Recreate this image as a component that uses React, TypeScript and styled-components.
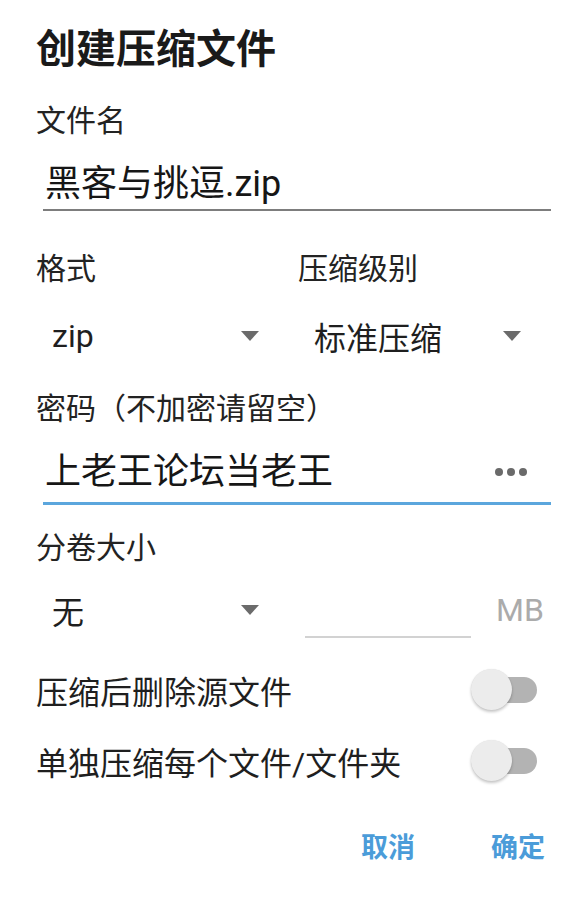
import React from "react";
import styled, { createGlobalStyle } from "styled-components";

const GlobalStyle = createGlobalStyle`
  html, body {
    margin: 0;
    padding: 0;
    background: #ffffff;
  }
  body {
    font-family: "Roboto", "Noto Sans CJK SC", "Noto Sans", sans-serif;
    color: #1f1f1f;
  }
  * { box-sizing: border-box; }
`;

const Dialog = styled.div`
  display: flex;
  flex-direction: column;
  width: 588px;
  padding: 0 37px 0 36px;
  background: #ffffff;
`;

const Title = styled.h1`
  margin: 0;
  height: 92px;
  display: flex;
  align-items: center;
  font-size: 40px;
  font-weight: 700;
  color: #1a1a1a;
`;

const Label = styled.div<{ $top?: number }>`
  height: 52px;
  margin-top: ${(p) => p.$top ?? 0}px;
  display: flex;
  align-items: center;
  font-size: 30px;
  color: #232323;
  white-space: nowrap;
`;

const Paren = styled.span`
  font-family: "Noto Sans CJK TC", "Noto Sans CJK SC", sans-serif;
  font-feature-settings: "halt" 0, "chws" 0;
  display: inline-block;
  width: 1em;
  text-align: center;
`;

const TextField = styled.div<{ $focused?: boolean }>`
  margin-left: 7px;
  padding: 20px 0 ${(p) => (p.$focused ? 10 : 5)}px 2px;
  border-bottom: ${(p) => (p.$focused ? "3px solid #5ba6dd" : "2px solid #7d7d7d")};
  display: flex;
  align-items: center;
  justify-content: space-between;
`;

const FieldText = styled.span`
  font-size: 36px;
  line-height: 40px;
  color: #161616;
  white-space: nowrap;
`;

const Dots = styled.div`
  display: flex;
  gap: 4px;
  margin-right: 24px;
`;

const Dot = styled.span`
  width: 8px;
  height: 8px;
  border-radius: 50%;
  background: #6a6a6a;
`;

const TwoCol = styled.div`
  margin-top: 29px;
  display: grid;
  grid-template-columns: 262px 1fr;
`;

const Spinner = styled.div<{ $h: number }>`
  width: 262px;
  height: ${(p) => p.$h}px;
  padding: 0 39px 0 16px;
  display: flex;
  align-items: center;
  justify-content: space-between;
  font-size: 32px;
  color: #1f1f1f;
`;

const Arrow = styled.span`
  width: 0;
  height: 0;
  border-left: 9.5px solid transparent;
  border-right: 9.5px solid transparent;
  border-top: 10px solid #6b6b6b;
`;

const SizeRow = styled.div`
  height: 78px;
  display: flex;
  align-items: center;
`;

const SizeInput = styled.div`
  width: 166px;
  height: 56px;
  margin-left: 7px;
  border-bottom: 2px solid #d2d2d2;
`;

const Unit = styled.span`
  margin-left: 25px;
  font-size: 32px;
  color: #ababab;
`;

const ToggleRow = styled.div<{ $top?: number }>`
  height: 71px;
  margin-top: ${(p) => p.$top ?? 0}px;
  padding-right: 14px;
  display: flex;
  align-items: center;
  justify-content: space-between;
  font-size: 32px;
  color: #1f1f1f;
`;

const Switch = styled.div`
  position: relative;
  width: 66px;
  height: 42px;
  flex-shrink: 0;
`;

const Track = styled.span`
  position: absolute;
  left: 10px;
  right: 0;
  top: 8px;
  height: 26px;
  border-radius: 13px;
  background: #b3b3b3;
`;

const Thumb = styled.span`
  position: absolute;
  left: 0;
  top: 0;
  width: 41px;
  height: 41px;
  border-radius: 50%;
  background: #ececec;
  box-shadow: 0 2px 3px rgba(0, 0, 0, 0.22), 0 0 1px rgba(0, 0, 0, 0.12);
`;

const ButtonBar = styled.div`
  height: 102px;
  padding: 33px 6px 0 0;
  display: flex;
  align-items: flex-start;
  justify-content: flex-end;
  gap: 76px;
`;

const TextButton = styled.button`
  border: none;
  background: none;
  padding: 0;
  font-family: inherit;
  font-size: 27px;
  line-height: 38px;
  font-weight: 700;
  color: #4b9cd9;
  cursor: pointer;
`;

const Toggle: React.FC = () => (
  <Switch>
    <Track />
    <Thumb />
  </Switch>
);

export default function App() {
  return (
    <>
      <GlobalStyle />
      <Dialog>
        <Title>创建压缩文件</Title>
        <Label>文件名</Label>
        <TextField>
          <FieldText>黑客与挑逗.zip</FieldText>
        </TextField>

        <TwoCol>
          <Label>格式</Label>
          <Label>压缩级别</Label>
          <Spinner $h={88}>
            <span>zip</span>
            <Arrow />
          </Spinner>
          <Spinner $h={88}>
            <span>标准压缩</span>
            <Arrow />
          </Spinner>
        </TwoCol>

        <Label>
          密码<Paren>（</Paren>不加密请留空<Paren>）</Paren>
        </Label>
        <TextField $focused>
          <FieldText>上老王论坛当老王</FieldText>
          <Dots>
            <Dot />
            <Dot />
            <Dot />
          </Dots>
        </TextField>

        <Label $top={14}>分卷大小</Label>
        <SizeRow>
          <Spinner $h={78}>
            <span>无</span>
            <Arrow />
          </Spinner>
          <SizeInput />
          <Unit>MB</Unit>
        </SizeRow>

        <ToggleRow $top={5}>
          <span>压缩后删除源文件</span>
          <Toggle />
        </ToggleRow>
        <ToggleRow>
          <span>单独压缩每个文件/文件夹</span>
          <Toggle />
        </ToggleRow>

        <ButtonBar>
          <TextButton>取消</TextButton>
          <TextButton>确定</TextButton>
        </ButtonBar>
      </Dialog>
    </>
  );
}
